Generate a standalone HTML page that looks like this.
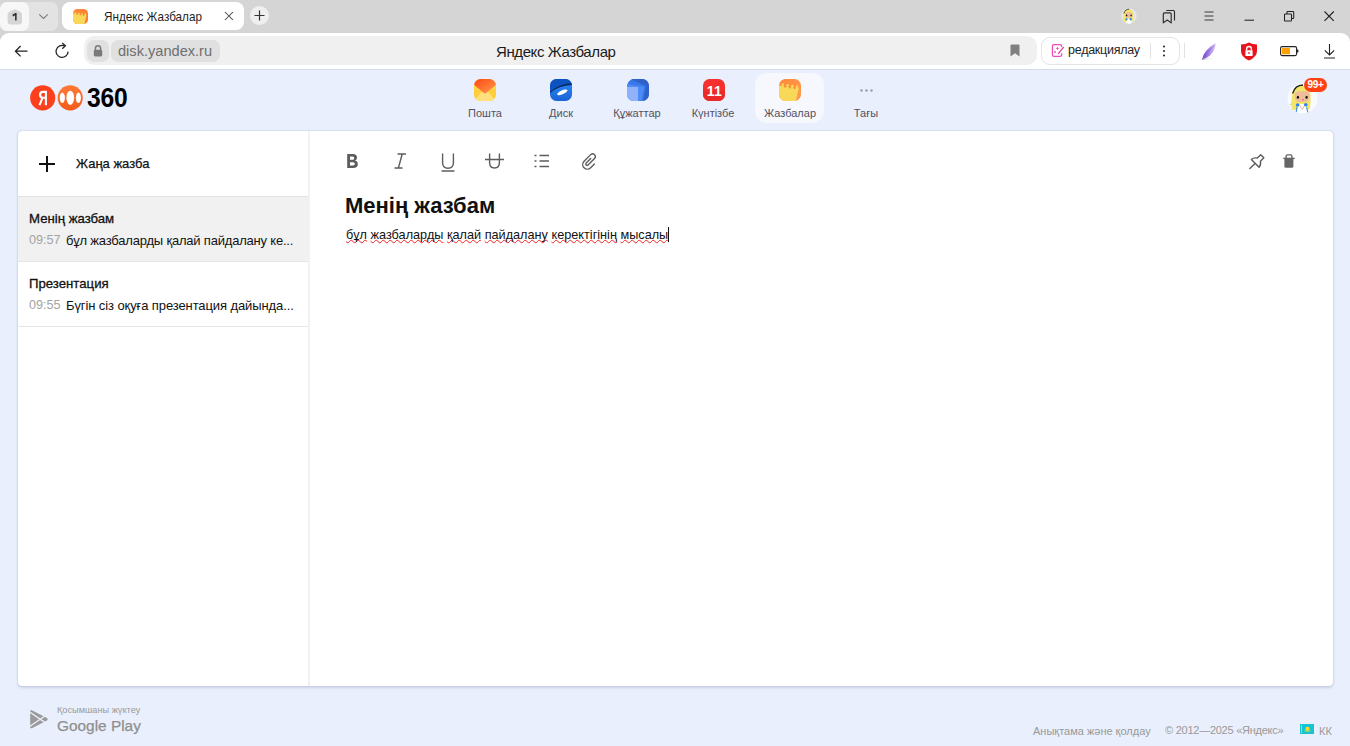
<!DOCTYPE html>
<html><head><meta charset="utf-8">
<style>
*{margin:0;padding:0;box-sizing:border-box}
html,body{width:1350px;height:746px;overflow:hidden;font-family:"Liberation Sans",sans-serif;background:#e9effc;position:relative}
.a{position:absolute}
svg{position:absolute}
.t{position:absolute;white-space:nowrap;line-height:1}
#tabs{left:0;top:0;width:1350px;height:45px;background:#d5d5d5}
#toolbar{left:0;top:32.5px;width:1350px;height:37px;background:#fff;border-radius:9px 9px 0 0}
#tbline{left:0;top:69px;width:1350px;height:1px;background:#d6dbe9}
#page{left:0;top:70px;width:1350px;height:676px;background:#e9effc}
.card{left:18px;top:131px;width:1315px;height:555px;background:#fff;border-radius:4px;box-shadow:0 0 1px rgba(40,60,110,.24),0 0 3px rgba(40,60,110,.08),0 1.5px 3px rgba(40,60,110,.14)}
.navlbl{font-size:11px;color:#525262;text-align:center;width:76px}
.sp{text-decoration:underline wavy #f52222;text-decoration-thickness:1.1px;text-underline-offset:0px;text-decoration-skip-ink:none}
.ico{width:22px;height:22px;border-radius:7px;overflow:hidden;top:79px}
</style></head>
<body>
<svg width="0" height="0" style="left:0;top:0"><defs><clipPath id="rr"><rect width="22" height="22" rx="6.5"/></clipPath></defs></svg>
<!-- ============ TAB STRIP ============ -->
<div id="tabs" class="a"></div>
<div class="a" style="left:0;top:2px;width:57.5px;height:28.5px;background:#e3e3e3;border-radius:7px"></div>
<div class="a" style="left:0;top:2px;width:29px;height:28.5px;background:#f7f7f7;border-radius:7px"></div>
<svg style="left:7px;top:9px" width="16" height="16" viewBox="0 0 16 16"><path d="M6.6 0.7 Q8 0 9.4 0.7 L13.6 2.9 Q15 3.6 15 5.2 V12.6 Q15 15.6 12 15.6 H3.6 Q0.6 15.6 0.6 12.6 V5.2 Q0.6 3.6 2 2.9 Z" fill="#d5d5d5"/><path d="M5.4 5.8 L8.4 4 H9.6 V11.4 H8.1 V6.3 L6 7.4 Z" fill="#2a2a2a"/></svg>
<svg style="left:38px;top:13px" width="11" height="7" viewBox="0 0 11 7"><path d="M1.2 1.4 L5.5 5.4 L9.8 1.4" fill="none" stroke="#7a7a7a" stroke-width="1.1"/></svg>
<div class="a" style="left:62px;top:2px;width:182px;height:28px;background:#fff;border-radius:8px"></div>
<svg style="left:73px;top:9px" width="15" height="15" viewBox="0 0 22 22"><defs><linearGradient id="ng0" x1="0" y1="0" x2="1" y2="1"><stop offset="0" stop-color="#ff8a3d"/><stop offset="1" stop-color="#ff7a2a"/></linearGradient></defs><g clip-path="url(#rr)"><rect x="0" y="0" width="22" height="22" fill="url(#ng0)"/><path d="M0 6.4 L19.9 9 L16.8 22 H0 Z" fill="#f8d858"/><circle cx="3.8" cy="5.6" r="1.3" fill="#f8d858"/><circle cx="8.6" cy="6.3" r="1.3" fill="#f8d858"/><circle cx="13.3" cy="7.0" r="1.3" fill="#f8d858"/><circle cx="18.1" cy="7.7" r="1.3" fill="#f8d858"/><circle cx="6.1" cy="7.7" r="1.1" fill="#ff8a3a"/><circle cx="10.8" cy="8.4" r="1.1" fill="#ff8a3a"/><circle cx="15.5" cy="9.1" r="1.1" fill="#ff8a3a"/></g></svg>
<div class="t" style="left:104px;top:10px;font-size:13px;color:#1f1f1f;transform:scaleX(0.9);transform-origin:0 0">Яндекс Жазбалар</div>
<svg style="left:224px;top:11px" width="10" height="10" viewBox="0 0 10 10"><path d="M1 1 L9 9 M9 1 L1 9" stroke="#444" stroke-width="1.05"/></svg>
<div class="a" style="left:250px;top:6px;width:19px;height:19px;background:#efefef;border-radius:50%"></div>
<svg style="left:254px;top:10px" width="11" height="11" viewBox="0 0 11 11"><path d="M5.5 0.5 V10.5 M0.5 5.5 H10.5" stroke="#333" stroke-width="1.2"/></svg>

<!-- right window controls -->
<svg style="left:1121px;top:8px" width="16" height="16" viewBox="0 0 31 31"><defs><clipPath id="avc2"><circle cx="15.5" cy="15.3" r="15"/></clipPath></defs><circle cx="15.5" cy="15.3" r="15" fill="#e6e6e6"/><g clip-path="url(#avc2)"><path d="M5 27 Q3.5 18 5.5 10 Q8 2.5 15 2.5 Q22.5 3 23.5 11 Q24 18 23 26 L18 27 Z" fill="#f3e56a"/><path d="M5.6 10.5 Q8 2.2 16 2" fill="none" stroke="#222" stroke-width="1.6"/><path d="M7.5 12 Q8 8.5 12 8.3 L18 8 Q22.5 8.5 22.8 12.5 Q23 17.5 19.5 19 H11 Q7.5 18 7.5 12 Z" fill="#eebd9a"/><ellipse cx="10.9" cy="14.3" rx="1.4" ry="1.8" fill="#111"/><ellipse cx="19.6" cy="14.3" rx="1.4" ry="1.8" fill="#111"/><path d="M9.5 31 L11.5 21 H19 L21 31 Z" fill="#fff"/><circle cx="10.6" cy="22" r="2.2" fill="#2f86e6"/><circle cx="18.8" cy="21.8" r="2.2" fill="#2f86e6"/></g></svg>
</div>
<svg style="left:1162px;top:9px" width="14" height="15" viewBox="0 0 14 15"><path d="M1.3 5 Q1.3 3.8 2.5 3.8 H8 Q9.2 3.8 9.2 5 V13.9 L5.25 11 L1.3 13.9 Z" fill="none" stroke="#2b2b2b" stroke-width="1.15" stroke-linejoin="round"/><path d="M4.3 1.5 H11.2 Q12.5 1.5 12.5 2.8 V11.4" fill="none" stroke="#2b2b2b" stroke-width="1.15"/></svg>
<svg style="left:1203px;top:10px" width="12" height="12" viewBox="0 0 12 12"><path d="M1.5 2 H10.5 M1.5 6 H10.5 M1.5 10 H10.5" stroke="#3a3a3a" stroke-width="1.05"/></svg>
<svg style="left:1243px;top:15px" width="12" height="6" viewBox="0 0 12 6"><path d="M1.5 5.2 H11" stroke="#222" stroke-width="1.05"/></svg>
<svg style="left:1283px;top:10px" width="12" height="12" viewBox="0 0 12 12"><rect x="1.5" y="4" width="7" height="7" fill="none" stroke="#222" stroke-width="1.05" rx="0.8"/><path d="M4 3.9 V2.2 Q4 1.5 4.7 1.5 H10 Q10.7 1.5 10.7 2.2 V7.8 Q10.7 8.5 10 8.5 H8.6" fill="none" stroke="#222" stroke-width="1.05"/></svg>
<svg style="left:1323px;top:10px" width="12" height="12" viewBox="0 0 12 12"><path d="M1.5 1.5 L10.8 10.8 M10.8 1.5 L1.5 10.8" stroke="#222" stroke-width="1.1"/></svg>

<!-- ============ TOOLBAR ============ -->
<div id="toolbar" class="a"></div>
<svg style="left:14px;top:45px" width="14" height="13" viewBox="0 0 14 13"><path d="M13.5 6.2 H1.8 M6.6 1 L1.4 6.2 L6.6 11.4" fill="none" stroke="#222" stroke-width="1.25"/></svg>
<svg style="left:55px;top:42px" width="15" height="17" viewBox="0 0 15 17"><path d="M9.6 3.9 A6 6 0 1 0 13.1 9.6" fill="none" stroke="#222" stroke-width="1.3"/><path d="M7.2 1.1 L10.4 3.8 L7.2 6.7" fill="none" stroke="#222" stroke-width="1.3"/></svg>
<div class="a" style="left:84px;top:36px;width:953px;height:28.5px;background:#f0f0f0;border-radius:10px"></div>
<div class="a" style="left:87px;top:40px;width:22px;height:22px;background:#e0e0e0;border-radius:7px"></div>
<svg style="left:93px;top:45px" width="10" height="12" viewBox="0 0 10 12"><path d="M2.4 5 V3.4 A2.6 2.6 0 0 1 7.6 3.4 V5" fill="none" stroke="#7a7a7a" stroke-width="1.5"/><rect x="0.8" y="4.8" width="8.4" height="6.6" rx="1.3" fill="#7a7a7a"/></svg>
<div class="a" style="left:111px;top:40px;width:109px;height:22px;background:#e0e0e0;border-radius:7px"></div>
<div class="t" style="left:118px;top:44px;font-size:14.6px;color:#6e6e6e">disk.yandex.ru</div>
<div class="t" style="left:496px;top:44px;font-size:15px;color:#1a1a1a;letter-spacing:-0.4px">Яндекс Жазбалар</div>
<svg style="left:1010px;top:44px" width="10" height="13" viewBox="0 0 10 13"><path d="M0.5 1.5 Q0.5 0.5 1.5 0.5 H8.5 Q9.5 0.5 9.5 1.5 V12.5 L5 9.2 L0.5 12.5 Z" fill="#808080"/></svg>
<div class="a" style="left:1041px;top:37px;width:139px;height:28px;background:#fff;border:1px solid #e4e4e4;border-radius:9px"></div>
<svg style="left:1046px;top:40px" width="22" height="22" viewBox="0 0 22 22"><path d="M15.7 7.2 V6.2 Q15.7 4.6 14 4.6 H8 Q6.4 4.6 6.4 6.2 V14.8 Q6.4 16.4 8 16.4 H14 Q15.7 16.4 15.7 14.8 V13.2" fill="none" stroke="#f24ab8" stroke-width="1.25"/><path d="M12.3 13.6 L17.5 7.4" stroke="#f03aa8" stroke-width="1.3" stroke-linecap="round"/><path d="M11.5 6.8 Q11.8 8.1 13.1 8.4 Q11.8 8.7 11.5 10 Q11.2 8.7 9.9 8.4 Q11.2 8.1 11.5 6.8 Z" fill="#f24ab8"/><circle cx="9" cy="11.9" r="0.95" fill="#f24ab8"/></svg>
<div class="t" style="left:1068px;top:44px;font-size:12.5px;color:#1f1f1f;letter-spacing:-0.25px">редакциялау</div>
<div class="a" style="left:1150px;top:43px;width:1px;height:15px;background:#e2e2e2"></div>
<svg style="left:1162px;top:45px" width="4" height="12" viewBox="0 0 4 12"><circle cx="2" cy="1.5" r="1.1" fill="#333"/><circle cx="2" cy="6" r="1.1" fill="#333"/><circle cx="2" cy="10.5" r="1.1" fill="#333"/></svg>
<div class="a" style="left:1184px;top:43px;width:1px;height:15px;background:#e2e2e2"></div>
<svg style="left:1201px;top:42px" width="18" height="19" viewBox="0 0 18 19"><defs><linearGradient id="fg" x1="0" y1="0" x2="1" y2="0"><stop offset="0" stop-color="#7a48d0"/><stop offset="0.45" stop-color="#9f78e6"/><stop offset="1" stop-color="#d8c8f4"/></linearGradient><linearGradient id="fs" x1="0" y1="0" x2="1" y2="0"><stop offset="0" stop-color="#a0a0b0"/><stop offset="1" stop-color="#ffffff" stop-opacity="0"/></linearGradient></defs><path d="M1.2 17.2 Q2.5 8.5 14.5 1 Q15 7.5 9 13.5 Q5.5 16.5 1.2 17.2 Z" fill="url(#fg)"/><path d="M1.2 17.2 Q6 11 13 3.5" fill="none" stroke="#6a3cc0" stroke-width="0.7" opacity="0.6"/><path d="M1 17.6 Q7 16.2 14 16.5" fill="none" stroke="url(#fs)" stroke-width="1.1"/></svg>
<svg style="left:1240px;top:42px" width="18" height="19" viewBox="0 0 18 19"><path d="M9 0.5 Q12.5 2.3 17 2.5 V9 Q17 15 9 18.5 Q1 15 1 9 V2.5 Q5.5 2.3 9 0.5 Z" fill="#e8141c"/><path d="M6.6 8.3 V6.9 A2.4 2.4 0 0 1 11.4 6.9 V8.3" fill="none" stroke="#fff" stroke-width="1.4"/><rect x="5.4" y="8.2" width="7.2" height="5.8" rx="0.6" fill="#fff"/><rect x="8.4" y="10" width="1.2" height="2" fill="#e8141c"/></svg>
<svg style="left:1279px;top:45px" width="21" height="12" viewBox="0 0 21 12"><rect x="1.6" y="1.6" width="16" height="9" rx="1.6" fill="#fff" stroke="#222" stroke-width="1.1"/><rect x="3" y="3" width="8" height="6.2" rx="0.5" fill="#ffa000"/><path d="M17.6 4.3 Q19.6 4.3 19.6 6.1 Q19.6 7.9 17.6 7.9 Z" fill="#222"/></svg>
<svg style="left:1323px;top:43px" width="13" height="16" viewBox="0 0 13 16"><path d="M6.5 1 V12 M1.8 7.3 L6.5 12 L11.2 7.3 M1 15 H12" fill="none" stroke="#222" stroke-width="1.1"/></svg>
<div id="tbline" class="a"></div>

<!-- ============ PAGE ============ -->
<!-- logo -->
<svg style="left:30px;top:85px" width="26" height="26" viewBox="0 0 26 26"><circle cx="12.7" cy="12.8" r="12.6" fill="#fc3f1d"/><path d="M15.9 5.8 V20.2 M15.9 6.9 H12.9 Q10.1 6.9 10.1 9.8 Q10.1 12.7 12.9 12.7 H15.9 M12.6 12.6 L9.5 20.2" fill="none" stroke="#fff" stroke-width="2.1"/></svg>
<svg style="left:57px;top:85px" width="26" height="26" viewBox="0 0 26 26"><defs><linearGradient id="lg2" x1="0" y1="0" x2="0" y2="1"><stop offset="0" stop-color="#ff7a35"/><stop offset="1" stop-color="#f25a1c"/></linearGradient><clipPath id="cc2"><circle cx="13.2" cy="12.8" r="12.6"/></clipPath></defs><circle cx="13.2" cy="12.8" r="12.6" fill="url(#lg2)"/><g clip-path="url(#cc2)"><ellipse cx="13.3" cy="12.8" rx="3.9" ry="7.1" fill="#fff"/><ellipse cx="5.3" cy="12.8" rx="2.6" ry="5.3" fill="#fff"/><ellipse cx="21.4" cy="12.8" rx="2.5" ry="5.3" fill="#fff"/></g></svg>
<div class="t" style="left:86.5px;top:84px;font-size:28px;font-weight:700;color:#000;transform:scaleX(0.88);transform-origin:0 0;letter-spacing:-0.3px">360</div>

<!-- nav -->
<div class="a" style="left:755px;top:73px;width:69px;height:50px;background:#f6f8fe;border-radius:12px"></div>
<svg class="a" style="left:474px;top:79px" width="22" height="22" viewBox="0 0 22 22"><defs><linearGradient id="m1" x1="0" y1="0" x2="1" y2="1"><stop offset="0" stop-color="#ff4a10"/><stop offset="1" stop-color="#ff9a50"/></linearGradient></defs><g clip-path="url(#rr)"><rect width="22" height="22" rx="7" fill="#ffd24a"/><path d="M0 11 L0 22 H22 V11 Z" fill="#ffcd3c"/><path d="M0 22 L7.8 12.8 Q11 10.5 14.2 12.8 L22 22 Z" fill="#ffe07a"/><path d="M2 0 H20 Q22 0 22 3 V5.8 L12.4 13.8 Q11 15 9.6 13.8 L0 5.8 V3 Q0 0 2 0 Z" fill="url(#m1)"/></g></svg>
<svg class="a" style="left:550px;top:79px" width="22" height="22" viewBox="0 0 22 22"><defs><linearGradient id="dk" x1="0" y1="0" x2="0" y2="1"><stop offset="0" stop-color="#2f8ff8"/><stop offset="1" stop-color="#1a62d6"/></linearGradient></defs><g clip-path="url(#rr)"><rect width="22" height="22" fill="url(#dk)"/><path d="M0 0 H22 V4.5 Q9 5 0 12 Z" fill="#0e52c0"/><path d="M0 12.5 Q7 5.5 22 4 V6 Q9 6.5 0 14 Z" fill="#082a66"/><ellipse cx="12.3" cy="13.3" rx="5.6" ry="1.9" transform="rotate(-24 12.3 13.3)" fill="#fff"/></g></svg>
<svg class="a" style="left:627px;top:79px" width="22" height="22" viewBox="0 0 22 22"><g clip-path="url(#rr)"><rect width="22" height="22" rx="7" fill="#3a78ea"/><path d="M3 0 H22 V22 H16 L19 7 Z" fill="#2f62c8"/><path d="M0 5 L17 8 L14.5 22 H0 Z" fill="#4d8cf8"/><path d="M0 8 H11 V22 H0 Z" fill="#8fb2fb"/></g></svg>
<svg class="a" style="left:703px;top:79px" width="22" height="22" viewBox="0 0 22 22"><g clip-path="url(#rr)"><rect width="22" height="22" fill="#f5302e"/><rect y="11.5" width="22" height="10.5" fill="#e92a28"/><text x="11.3" y="16.6" font-family="Liberation Sans" font-weight="700" font-size="14" fill="#fff" text-anchor="middle" letter-spacing="0.2">11</text></g></svg>
<svg class="a" style="left:779px;top:79px" width="22" height="22" viewBox="0 0 22 22"><defs><linearGradient id="n1" x1="0" y1="0" x2="1" y2="1"><stop offset="0" stop-color="#ff8a3a"/><stop offset="1" stop-color="#ff9a50"/></linearGradient></defs><g clip-path="url(#rr)"><rect width="22" height="22" fill="url(#n1)"/><path d="M0 6.4 L19.9 9 L16.8 22 H0 Z" fill="#f8d858"/><circle cx="3.8" cy="5.6" r="1.3" fill="#f8d858"/><circle cx="8.6" cy="6.3" r="1.3" fill="#f8d858"/><circle cx="13.3" cy="7.0" r="1.3" fill="#f8d858"/><circle cx="18.1" cy="7.7" r="1.3" fill="#f8d858"/><circle cx="6.1" cy="7.7" r="1.1" fill="#ff8a3a"/><circle cx="10.8" cy="8.4" r="1.1" fill="#ff8a3a"/><circle cx="15.5" cy="9.1" r="1.1" fill="#ff8a3a"/></g></svg>
<svg class="a" style="left:860px;top:89px" width="13" height="3" viewBox="0 0 13 3"><circle cx="1.5" cy="1.5" r="1.2" fill="#9a9aa6"/><circle cx="6.5" cy="1.5" r="1.2" fill="#9a9aa6"/><circle cx="11.5" cy="1.5" r="1.2" fill="#9a9aa6"/></svg>
<div class="t navlbl" style="left:447px;top:108px">Пошта</div>
<div class="t navlbl" style="left:523px;top:108px">Диск</div>
<div class="t navlbl" style="left:599px;top:108px">Құжаттар</div>
<div class="t navlbl" style="left:675px;top:108px">Күнтізбе</div>
<div class="t navlbl" style="left:752px;top:108px">Жазбалар</div>
<div class="t navlbl" style="left:828px;top:108px">Тағы</div>

<!-- avatar -->
<svg style="left:1287px;top:83px" width="31" height="31" viewBox="0 0 31 31"><defs><clipPath id="avc"><circle cx="15.5" cy="15.3" r="15"/></clipPath></defs><circle cx="15.5" cy="15.3" r="15" fill="#fafafc"/><g clip-path="url(#avc)"><path d="M5 27 Q3.5 18 5.5 10 Q8 2.5 15 2.5 Q22.5 3 23.5 11 Q24 18 23 26 L18 27 Z" fill="#f3e56a"/><path d="M5.6 10.5 Q8 2.2 16 2" fill="none" stroke="#222" stroke-width="1.3"/><path d="M7.5 12 Q8 8.5 12 8.3 L18 8 Q22.5 8.5 22.8 12.5 Q23 17.5 19.5 19 H11 Q7.5 18 7.5 12 Z" fill="#eebd9a"/><ellipse cx="10.9" cy="14.3" rx="1.1" ry="1.5" fill="#111"/><ellipse cx="19.6" cy="14.3" rx="1.1" ry="1.5" fill="#111"/><circle cx="16" cy="16.8" r="0.8" fill="#e0508a"/><path d="M9.5 31 L11.5 21 H19 L21 31 Z" fill="#fff"/><path d="M12.5 22 L15.3 26.5 L18 22" fill="none" stroke="#e8a090" stroke-width="0.8"/><circle cx="10.6" cy="22" r="1.8" fill="#2f86e6"/><circle cx="18.8" cy="21.8" r="1.8" fill="#2f86e6"/><path d="M10 24 L9 30 M19.5 24 L21 30" stroke="#2f86e6" stroke-width="1"/><path d="M3 22 Q4 20 5 21" stroke="#cfcf70" stroke-width="1" fill="none"/></g></svg>
<div class="a" style="left:1304px;top:78px;width:23px;height:14px;border-radius:7px;background:#fc4212"></div>
<div class="t" style="left:1304px;top:80px;width:23px;text-align:center;font-size:10px;font-weight:700;color:#fff;letter-spacing:-0.4px">99+</div>

<!-- ============ CARD ============ -->
<div class="card a"></div>
<div class="a" style="left:308px;top:131px;width:2px;height:555px;background:#f2f2f2"></div>
<svg style="left:39px;top:156px" width="16" height="16" viewBox="0 0 16 16"><path d="M8 0 V16 M0 8 H16" stroke="#111" stroke-width="2"/></svg>
<div class="t" style="left:76px;top:157px;font-size:13px;color:#111;-webkit-text-stroke:0.25px #111">Жаңа жазба</div>
<div class="a" style="left:18px;top:196px;width:290px;height:1px;background:#e3e3e3"></div>
<div class="a" style="left:18px;top:197px;width:290px;height:64px;background:#f1f1f1"></div>
<div class="a" style="left:18px;top:261px;width:290px;height:1px;background:#e6e6e6"></div>
<div class="a" style="left:18px;top:326px;width:290px;height:1px;background:#e6e6e6"></div>

<div class="t" style="left:29px;top:212px;font-size:13.2px;color:#111;-webkit-text-stroke:0.3px #111;letter-spacing:0px">Менің жазбам</div>
<div class="t" style="left:29px;top:234px;font-size:12.6px;color:#a3a3a3">09:57</div>
<div class="t" style="left:66px;top:234px;font-size:13px;color:#111;letter-spacing:-0.2px">бұл жазбаларды қалай пайдалану ке...</div>
<div class="t" style="left:29px;top:277px;font-size:13.2px;color:#111;-webkit-text-stroke:0.3px #111;letter-spacing:0px">Презентация</div>
<div class="t" style="left:29px;top:299px;font-size:12.6px;color:#a3a3a3">09:55</div>
<div class="t" style="left:66px;top:299px;font-size:13px;color:#111;letter-spacing:-0.1px">Бүгін сіз оқуға презентация дайында...</div>

<!-- editor toolbar -->
<svg style="left:346px;top:153px" width="13" height="16" viewBox="0 0 13 16"><path d="M1.2 1 H6.8 Q11 1 11 4.6 Q11 6.9 9 7.6 Q11.8 8.3 11.8 11.2 Q11.8 15 7.2 15 H1.2 Z M4 3.5 V6.8 H6.6 Q8.2 6.8 8.2 5.15 Q8.2 3.5 6.6 3.5 Z M4 9.2 V12.5 H6.9 Q8.9 12.5 8.9 10.85 Q8.9 9.2 6.9 9.2 Z" fill="#5c5c5c" fill-rule="evenodd"/></svg>
<svg style="left:394px;top:153px" width="13" height="16" viewBox="0 0 13 16"><path d="M3.5 1 H12 M0.5 15 H8.5 M8.2 1 L4.4 15" fill="none" stroke="#5c5c5c" stroke-width="1.4"/></svg>
<svg style="left:441px;top:153px" width="14" height="20" viewBox="0 0 14 20"><path d="M1.6 0.5 V9.5 Q1.6 15.2 7 15.2 Q12.4 15.2 12.4 9.5 V0.5" fill="none" stroke="#5c5c5c" stroke-width="1.4"/><path d="M0.5 18 H13.5" stroke="#5c5c5c" stroke-width="1.5"/></svg>
<svg style="left:485px;top:153px" width="19" height="16" viewBox="0 0 19 16"><path d="M4.6 0.5 V9.5 Q4.6 15 9.5 15 Q14.4 15 14.4 9.5 V0.5 M0 6.5 H19" fill="none" stroke="#5c5c5c" stroke-width="1.4"/></svg>
<svg style="left:534px;top:154px" width="16" height="14" viewBox="0 0 16 14"><path d="M0.5 1.5 H2.5 M0.5 7 H2.5 M0.5 12.5 H2.5 M5.5 1.5 H15 M5.5 7 H15 M5.5 12.5 H15" stroke="#5c5c5c" stroke-width="1.4"/></svg>
<svg style="left:578px;top:149px" width="22" height="24" viewBox="0 0 22 24"><g transform="translate(12,12.9) rotate(45)"><path d="M4.65 -1.54 L4.65 3.71 A4.65 4.65 0 0 1 -4.65 3.71 L-4.65 -5.64 A2.7 2.7 0 0 1 0.75 -5.64 L0.75 3.56 A1.3 1.3 0 0 1 -1.85 3.56 L-1.85 -2.84" fill="none" stroke="#5c5c5c" stroke-width="1.4" stroke-linecap="round"/></g></svg>
<svg style="left:1246px;top:150px" width="22" height="22" viewBox="0 0 22 22"><g transform="translate(3.9,18.6) rotate(45)"><path d="M0 0 V-7.3" stroke="#5c5c5c" stroke-width="1.4" stroke-linecap="round"/><path d="M-5.5 -7.5 L5.5 -7.5 Q5.3 -10.6 2.2 -12.7 L2.2 -17.5 L-2.2 -17.5 L-2.2 -12.7 Q-5.3 -10.6 -5.5 -7.5 Z" fill="none" stroke="#5c5c5c" stroke-width="1.4" stroke-linejoin="round"/></g></svg>
<svg style="left:1278px;top:150px" width="22" height="22" viewBox="0 0 22 22"><path d="M5.3 8.4 H16.7" stroke="#666" stroke-width="1.4"/><path d="M8.1 8.4 V6.2 Q8.1 4.9 9.4 4.9 H12.6 Q13.9 4.9 13.9 6.2 V8.4" fill="none" stroke="#666" stroke-width="1.4"/><path d="M6.4 8.4 H15.4 V16.2 Q15.4 17.8 13.8 17.8 H8 Q6.4 17.8 6.4 16.2 Z" fill="#666"/></svg>

<div class="t" style="left:345px;top:195px;font-size:22px;font-weight:700;color:#111">Менің жазбам</div>
<div class="t" style="left:346px;top:229px;font-size:12.7px;color:#111"><span class="sp">бұл</span> <span class="sp">жазбаларды</span> <span class="sp">қалай</span> <span class="sp">пайдалану</span> <span class="sp">керектігінің</span> <span class="sp">мысалы</span></div>
<div class="a" style="left:668px;top:227px;width:1px;height:15px;background:#111"></div>

<!-- ============ FOOTER ============ -->
<svg style="left:27px;top:707px" width="24" height="24" viewBox="0 0 24 24"><path d="M3.2 4.6 Q3.2 2.4 5.3 3.4 L20 11 Q21.6 12.2 20 13.4 L5.3 21 Q3.2 22 3.2 19.8 Z" fill="#9a9a9a"/><path d="M1.5 4.2 L19 16.1 M1.5 20.2 L19 8.3" stroke="#e9effc" stroke-width="1.35"/></svg>
<div class="t" style="left:57px;top:706px;font-size:9.2px;color:#9a9a9a">Қосымшаны жүктеу</div>
<div class="t" style="left:57px;top:718px;font-size:15.4px;color:#8f8f8f;-webkit-text-stroke:0.25px #8f8f8f">Google Play</div>
<div class="t" style="left:1033px;top:726px;font-size:11px;color:#999">Анықтама және қолдау</div>
<div class="t" style="left:1165px;top:725px;font-size:11px;color:#999;letter-spacing:-0.25px">© 2012—2025 «Яндекс»</div>
<svg style="left:1300px;top:724px" width="14" height="10" viewBox="0 0 14 10"><rect width="14" height="10" fill="#19c3d6"/><circle cx="7.5" cy="4.8" r="2" fill="#f5e02a"/><path d="M4.5 6.5 Q7.5 8.5 10.5 6.5" stroke="#f5e02a" stroke-width="0.8" fill="none"/><rect x="1" y="1" width="0.8" height="8" fill="#f5e02a"/></svg>
<div class="t" style="left:1319px;top:726px;font-size:11px;color:#999">КК</div>
</body></html>
